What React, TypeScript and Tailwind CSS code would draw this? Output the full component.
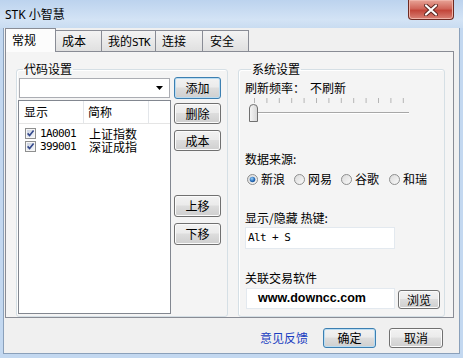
import type { ReactNode } from "react";

const cjk = "font-['Noto_Sans_CJK_SC',sans-serif]";
const mono = "font-['DejaVu_Sans_Mono','Noto_Sans_CJK_SC',monospace] text-[11px] tracking-[-0.6px]";

function Btn({ children, isDefault, className = "" }: { children: ReactNode; isDefault?: boolean; className?: string }) {
  return (
    <div
      className={`flex items-center justify-center rounded-[3px] border text-[12px] leading-none bg-[linear-gradient(#f2f2f2_0%,#ebebeb_45%,#dddddd_50%,#cfcfcf_100%)] ${
        isDefault ? "border-[#3c7fb1] shadow-[inset_0_0_0_1px_#b9dcf2]" : "border-[#707070] shadow-[inset_0_0_0_1px_#fbfbfb]"
      } ${className}`}
    >
      {children}
    </div>
  );
}

function Check() {
  return (
    <svg width="11" height="11" viewBox="0 0 11 11" className="shrink-0">
      <defs>
        <linearGradient id="cb" x1="0" y1="0" x2="1" y2="1">
          <stop offset="0" stopColor="#cbd2e0" />
          <stop offset="1" stopColor="#f4f6fa" />
        </linearGradient>
      </defs>
      <rect x="0.5" y="0.5" width="10" height="10" fill="#f6f6f6" stroke="#8e8f8f" />
      <rect x="2" y="2" width="7" height="7" fill="url(#cb)" />
      <path d="M2.6 5.4 L4.6 7.6 L8.6 2.6" fill="none" stroke="#34488a" strokeWidth="1.6" />
    </svg>
  );
}

function Radio({ on }: { on?: boolean }) {
  return (
    <svg width="11" height="11" viewBox="0 0 11 11" className="shrink-0">
      <defs>
        <linearGradient id="rb" x1="0" y1="0" x2="1" y2="1">
          <stop offset="0" stopColor="#d9d9d9" />
          <stop offset="1" stopColor="#fbfbfb" />
        </linearGradient>
        <radialGradient id="rd" cx="0.4" cy="0.35" r="0.7">
          <stop offset="0" stopColor="#9fd2f6" />
          <stop offset="0.6" stopColor="#2d73c0" />
          <stop offset="1" stopColor="#1a4d8c" />
        </radialGradient>
      </defs>
      <circle cx="5.5" cy="5.5" r="5" fill="url(#rb)" stroke="#8e8f8f" />
      {on && <circle cx="5.5" cy="5.5" r="2.8" fill="url(#rd)" />}
    </svg>
  );
}

function Slider() {
  const ticks = Array.from({ length: 13 }, (_, i) => 10 + i * 12.4);
  return (
    <svg width="168" height="28" viewBox="0 0 168 28" className="mt-[1px] -ml-[1px]">
      {ticks.map((x) => (
        <line key={x} x1={x + 0.5} y1="2" x2={x + 0.5} y2="7" stroke="#b5b5b5" />
      ))}
      <rect x="12" y="16" width="153" height="1" fill="#a7a7a7" />
      <rect x="12" y="17" width="153" height="1" fill="#ffffff" />
      <defs>
        <linearGradient id="th" x1="0" y1="0" x2="1" y2="0">
          <stop offset="0" stopColor="#f7f7f7" />
          <stop offset="1" stopColor="#d6d6d6" />
        </linearGradient>
      </defs>
      <path d="M5.5 12 Q5.5 8.5 9.5 8.5 Q13.5 8.5 13.5 12 L13.5 25.5 L5.5 25.5 Z" fill="url(#th)" stroke="#707070" />
    </svg>
  );
}

function Tab({ label, active, className = "" }: { label: ReactNode; active?: boolean; className?: string }) {
  return (
    <div
      className={`flex items-start pl-[6px] border border-[#898c95] border-b-0 text-[12px] leading-[14px] ${
        active ? "relative z-10 h-[24px] -mb-px bg-[#fcfcfc] pt-[4px]" : "h-[21px] -ml-px bg-[linear-gradient(#f3f3f3,#e0e0e0)] pt-[3px]"
      } ${className}`}
    >
      {label}
    </div>
  );
}

function Group({ title, className = "", children }: { title: string; className?: string; children: ReactNode }) {
  return (
    <fieldset className={`rounded-[3px] border border-[#d5dfe5] shadow-[inset_1px_1px_0_#ffffff] ${className}`}>
      <legend className="ml-[6px] px-[1px] text-[12px] leading-[14px]">{title}</legend>
      {children}
    </fieldset>
  );
}

export default function App() {
  return (
    <div className={`relative flex h-[358px] w-[463px] flex-col overflow-hidden bg-[#c3d8f0] text-black ${cjk}`}>
      <div className="flex h-[28px] shrink-0 items-center bg-[linear-gradient(#bcd3ee,#d3e3f5_70%,#c9dcf1)] pl-[5px] pt-[1px] text-[12px] font-['Noto_Sans','Noto_Sans_CJK_SC',sans-serif]">
        STK 小智慧
      </div>
      <div className="absolute right-[9px] top-0 flex h-[20px] w-[46px] items-center justify-center rounded-b-[4px] border border-t-0 border-[#6e2a22] bg-[linear-gradient(#e8a497,#d0665a_45%,#c2463a_55%,#d98276)] shadow-[inset_0_0_0_1px_#efb3a8]">
        <svg width="14" height="12" viewBox="0 0 14 12">
          <path d="M2 1.5 L12 10.5 M12 1.5 L2 10.5" stroke="#5a2620" strokeWidth="4" strokeLinecap="round" />
          <path d="M2 1.5 L12 10.5 M12 1.5 L2 10.5" stroke="#ffffff" strokeWidth="2.2" strokeLinecap="round" />
        </svg>
      </div>

      <div className="ml-[3px] flex h-[326px] w-[457px] flex-col border-x border-b border-[#8aa0ba] bg-[#f0f0f0]">
        <div className="flex items-end pl-[1px]">
          <Tab label="常规" active className="w-[51px]" />
          <Tab label="成本" className="w-[47px] pl-[5px]" />
          <Tab label={<span>我的<span className={mono}>STK</span></span>} className="w-[55px]" />
          <Tab label="连接" className="w-[48px]" />
          <Tab label="安全" className="w-[47px] pl-[7px]" />
        </div>

        <div className="ml-[1px] flex h-[267px] w-[449px] gap-[10px] border border-[#898c95] bg-[#f4f4f4] pl-[10px]">
          <Group title="代码设置" className="mt-[10px] flex h-[255px] w-[212px] flex-col">
            <div className="flex">
              <div className="ml-[1px] flex w-[153px] flex-col">
                <div className="ml-[1px] mt-[2px] flex h-[20px] w-[151px] items-center justify-end border border-[#abadb3] bg-white pr-[6px]">
                  <svg width="7" height="4" viewBox="0 0 7 4">
                    <path d="M0 0 H7 L3.5 4 Z" fill="#000" />
                  </svg>
                </div>
                <div className="mt-[2px] h-[214px] border border-[#828790] bg-white">
                  <div className="flex h-[23px] items-center border-b border-[#e5e5e5] text-[12px] leading-none">
                    <div className="flex h-full w-[65px] items-center border-r border-[#e3e6ea] pl-[5px]">显示</div>
                    <div className="flex h-full w-[65px] items-center border-r border-[#e3e6ea] pl-[4px]">简称</div>
                  </div>
                  <div className="pt-[3px]">
                    {[
                      ["1A0001", "上证指数"],
                      ["399001", "深证成指"],
                    ].map(([code, name]) => (
                      <div key={code} className="flex h-[13px] items-center text-[12px] leading-[13px]">
                        <div className="flex w-[65px] items-center gap-[4px] pl-[6px]">
                          <Check />
                          <span className={mono}>{code}</span>
                        </div>
                        <span className="pl-[5px]">{name}</span>
                      </div>
                    ))}
                  </div>
                </div>
              </div>
              <div className="ml-[3px] flex w-[47px] flex-col">
                <Btn isDefault className="mt-[1px] h-[22px]">添加</Btn>
                <Btn className="mt-[4px] h-[21px]">删除</Btn>
                <Btn className="mt-[6px] h-[21px]">成本</Btn>
                <Btn className="mt-[44px] h-[22px]">上移</Btn>
                <Btn className="mt-[6px] h-[22px]">下移</Btn>
              </div>
            </div>
          </Group>

          <Group title="系统设置" className="mt-[10px] flex h-[255px] w-[207px] flex-col pl-[6px] text-[12px]">
            <div className="mt-[5px] flex leading-[14px]">
              <span>刷新频率：</span>
              <span className="ml-[5px]">不刷新</span>
            </div>
            <Slider />
            <div className="mt-[28px] leading-[14px]">数据来源:</div>
            <div className="mt-[6px] flex h-[14px] items-center leading-none">
              {[
                ["新浪", true],
                ["网易", false],
                ["谷歌", false],
                ["和瑞", false],
              ].map(([label, on], i) => (
                <div key={label as string} className={`flex items-center gap-[3px] ${i === 0 ? "ml-[2px]" : i === 3 ? "ml-[10px]" : "ml-[9px]"}`}>
                  <Radio on={on as boolean} />
                  <span>{label}</span>
                </div>
              ))}
            </div>
            <div className="mt-[25px] leading-[14px]">显示/隐藏 热键:</div>
            <div className="mt-[2px] flex h-[22px] w-[150px] items-center border border-[#e3e9ef] bg-white pl-[2px]">
              <span className={mono}>Alt + S</span>
            </div>
            <div className="mt-[22px] leading-[14px]">关联交易软件</div>
            <div className="mt-[3px] flex items-start">
              <div className="ml-[1px] flex h-[21px] w-[149px] items-center border border-[#e3e9ef] bg-white pl-[11px] font-['Liberation_Sans',sans-serif] text-[12.5px] font-bold leading-none">
                www.downcc.com
              </div>
              <Btn className="ml-[3px] mt-[2px] h-[19px] w-[42px]">浏览</Btn>
            </div>
          </Group>
        </div>

        <div className="mt-[10px] flex items-center justify-end pr-[16px] text-[12px]">
          <span className="mr-[15px] text-[#1a3dc1]">意见反馈</span>
          <Btn isDefault className="h-[20px] w-[53px]">确定</Btn>
          <Btn className="ml-[13px] h-[20px] w-[54px]">取消</Btn>
        </div>
      </div>
    </div>
  );
}
